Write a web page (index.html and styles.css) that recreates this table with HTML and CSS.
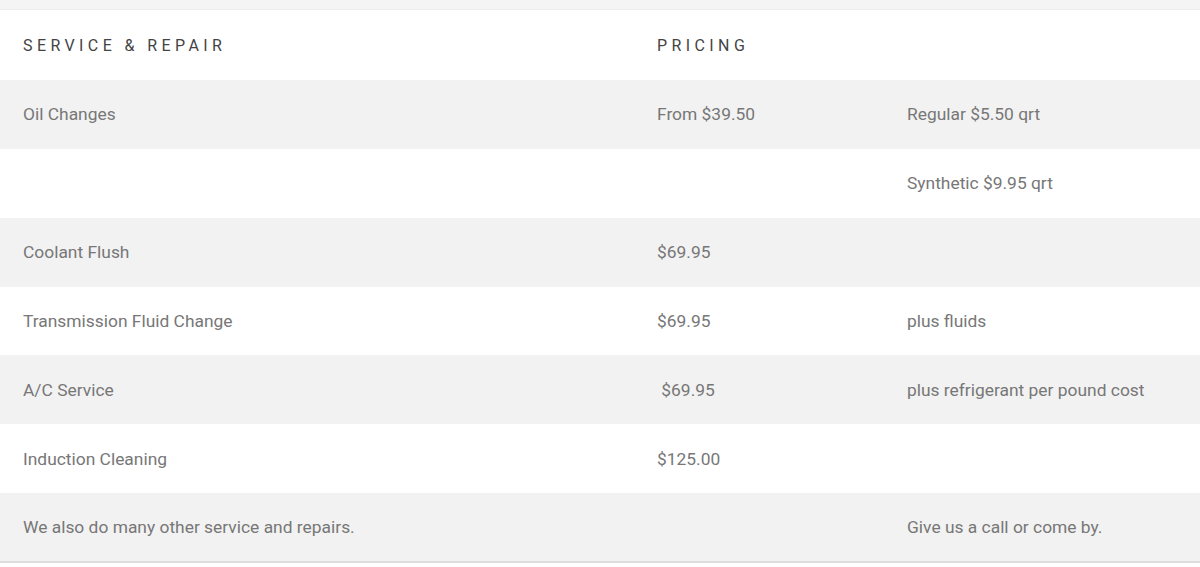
FILE: index.html
```html
<!DOCTYPE html>
<html>
<head>
<meta charset="utf-8">
<link rel="stylesheet" href="styles.css">
</head>
<body>
<div class="top-strip"></div>
<table class="price-table">
  <thead>
    <tr class="head-row">
      <th class="c1">Service &amp; Repair</th>
      <th class="c2">Pricing</th>
      <th class="c3"></th>
    </tr>
  </thead>
  <tbody>
    <tr class="odd"><td>Oil Changes</td><td>From $39.50</td><td>Regular $5.50 qrt</td></tr>
    <tr class="even"><td></td><td></td><td>Synthetic $9.95 qrt</td></tr>
    <tr class="odd"><td>Coolant Flush</td><td>$69.95</td><td></td></tr>
    <tr class="even"><td>Transmission Fluid Change</td><td>$69.95</td><td>plus fluids</td></tr>
    <tr class="odd"><td>A/C Service</td><td>&nbsp;$69.95</td><td>plus refrigerant per pound cost</td></tr>
    <tr class="even"><td>Induction Cleaning</td><td>$125.00</td><td></td></tr>
    <tr class="odd last"><td>We also do many other service and repairs.</td><td></td><td>Give us a call or come by.</td></tr>
  </tbody>
</table>
</body>
</html>
```
FILE: styles.css
```css
html, body {
  margin: 0;
  padding: 0;
  background: #ffffff;
  font-family: Roboto, "Liberation Sans", sans-serif;
}
.top-strip {
  height: 10px;
  background: #f4f4f4;
  border-bottom: 1px solid #ececec;
  box-sizing: border-box;
}
.price-table {
  width: 1200px;
  border-collapse: collapse;
  table-layout: fixed;
}
.price-table th,
.price-table td {
  box-sizing: border-box;
  padding: 0 0 0 23px;
  vertical-align: middle;
  text-align: left;
}
.price-table .c1 { width: 634px; }
.price-table .c2 { width: 250px; }
.price-table .c3 { width: 316px; }
.price-table th {
  height: 70px;
  font-weight: 400;
  font-size: 16px;
  letter-spacing: 4.4px;
  text-transform: uppercase;
  color: #444444;
}
.price-table td {
  height: 68.86px;
  font-size: 17.4px;
  color: #777777;
  white-space: pre;
}
.price-table tr.odd td { background: #f2f2f2; }
.price-table tr.even td { background: #ffffff; }
.price-table tr.last td { border-bottom: 2px solid #dddddd; }
```
